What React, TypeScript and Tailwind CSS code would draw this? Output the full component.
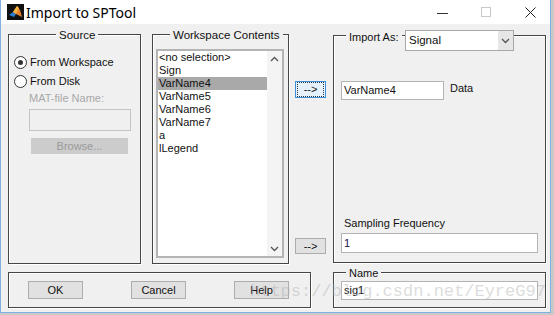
import React from "react";

const font = { fontFamily: '"Liberation Sans", Arial, sans-serif' };

function Chevron({ up = false }: { up?: boolean }) {
  return (
    <svg width="9" height="6" viewBox="0 0 9 6">
      <polyline
        points={up ? "1,5 4.5,1.5 8,5" : "1,1 4.5,4.5 8,1"}
        fill="none"
        stroke="#555"
        strokeWidth="1.3"
      />
    </svg>
  );
}

function Radio({ checked }: { checked?: boolean }) {
  return (
    <div className="w-[13px] h-[13px] rounded-full border border-[#333] bg-white flex items-center justify-center">
      {checked && <div className="w-[5px] h-[5px] rounded-full bg-[#333]" />}
    </div>
  );
}

function Panel({
  className = "",
  children,
}: {
  className?: string;
  children?: React.ReactNode;
}) {
  return (
    <div
      className={
        "relative border border-[#454545] shadow-[1px_1px_0_#ffffff,inset_1px_1px_0_#ffffff] " +
        className
      }
    >
      {children}
    </div>
  );
}

function Btn({
  label,
  className = "",
  focused = false,
}: {
  label: string;
  className?: string;
  focused?: boolean;
}) {
  return (
    <div
      className={
        "flex items-center justify-center text-[11px] text-[#111] " +
        (focused
          ? "bg-[#e5f1fb] border border-[#3c8fdc] "
          : "bg-[#e1e1e1] border border-[#adadad] ") +
        className
      }
    >
      {focused ? (
        <div className="w-full h-full border border-dotted border-[#333] flex items-center justify-center m-[1px]">
          {label}
        </div>
      ) : (
        label
      )}
    </div>
  );
}

export default function App() {
  const items = [
    "<no selection>",
    "Sign",
    "VarName4",
    "VarName5",
    "VarName6",
    "VarName7",
    "a",
    "lLegend",
  ];
  return (
    <div
      className="w-[554px] h-[315px] bg-[#c9c9c9] overflow-hidden relative"
      style={font}
    >
      <div className="w-[551px] h-[313px] flex flex-col bg-[#f0f0f0] border-l border-r border-b border-[#7fb0e0]">
        {/* Title bar */}
        <div className="h-[24px] bg-white flex items-center shrink-0 relative">
          <svg width="17" height="16" viewBox="0 0 17 16" className="ml-[6px]">
            <rect x="0" y="0" width="17" height="16" fill="#111" />
            <polygon points="2,11 6,8 9,10 7,13" fill="#2a7fd4" />
            <polygon points="6,8 10,2 13,6 15,13 9,10" fill="#e8802a" />
            <polygon points="10,2 12,4 9,10 6,8" fill="#f4b440" />
          </svg>
          <span
            className="ml-[2px] text-[14px] text-black whitespace-nowrap"
            style={{ fontFamily: '"Noto Sans", "Open Sans", sans-serif' }}
          >
            Import to SPTool
          </span>
          <div className="flex-1" />
          <div className="w-[11px] h-px bg-[#333] mr-[33px] mt-[2px]" />
          <div className="w-[10px] h-[10px] border border-[#c8c8c8] mr-[34px]" />
          <svg width="11" height="11" viewBox="0 0 11 11" className="mr-[14px]">
            <path d="M0.5 0.5 L10.5 10.5 M10.5 0.5 L0.5 10.5" stroke="#222" strokeWidth="1" />
          </svg>
        </div>

        {/* Content */}
        <div className="flex-1 flex flex-col pt-[10px] pl-[7px]">
          {/* Top row */}
          <div className="flex h-[230px]">
            {/* Source */}
            <Panel className="w-[133px] h-full">
              <span className="absolute top-[-7px] left-[47px] px-[3px] bg-[#f0f0f0] text-[11.5px] leading-[14px] text-[#111] whitespace-nowrap">
                Source
              </span>
              <div className="flex flex-col pt-[21px] pl-[5px] text-[11px] text-[#111]">
                <div className="flex items-center h-[13px]">
                  <Radio checked />
                  <span className="ml-[3px] whitespace-nowrap">From Workspace</span>
                </div>
                <div className="flex items-center h-[13px] mt-[6px]">
                  <Radio />
                  <span className="ml-[3px] whitespace-nowrap">From Disk</span>
                </div>
                <div className="ml-[15px] mt-[3px] text-[#a8a8a8] leading-[14px] whitespace-nowrap">
                  MAT-file Name:
                </div>
                <div className="ml-[15px] mt-[4px] w-[102px] h-[22px] border border-[#c4c4c4] bg-[#f0f0f0]" />
                <div className="ml-[17px] mt-[7px] w-[97px] h-[16px] bg-[#cccccc] text-[#9a9a9a] flex items-center justify-center">
                  Browse...
                </div>
              </div>
            </Panel>

            {/* Workspace Contents */}
            <Panel className="w-[137px] h-full ml-[11px]">
              <span className="absolute top-[-7px] left-[17px] px-[3px] bg-[#f0f0f0] text-[11.5px] leading-[14px] text-[#111] whitespace-nowrap">
                Workspace Contents
              </span>
              <div className="mt-[14px] ml-[3px] w-[128px] h-[209px] border-2 border-[#b4b4b4] bg-white flex">
                <div className="flex-1 flex flex-col text-[11px] text-[#111]">
                  {items.map((it) => (
                    <div
                      key={it}
                      className={
                        "h-[13px] leading-[13px] pl-[1px] whitespace-nowrap " +
                        (it === "VarName4" ? "bg-[#a9a9a9]" : "")
                      }
                    >
                      {it}
                    </div>
                  ))}
                </div>
                <div className="w-[15px] bg-[#f4f4f4] flex flex-col items-center justify-between pt-[5px] pb-[4px]">
                  <Chevron up />
                  <Chevron />
                </div>
              </div>
            </Panel>

            {/* Arrow column */}
            <div className="w-[44px] h-full flex flex-col pl-[6px]">
              <Btn label="-->" focused className="w-[31px] h-[17px] mt-[47px]" />
              <div className="flex-1" />
              <Btn label="-->" className="w-[31px] h-[16px] mb-[10px]" />
            </div>

            {/* Right panel */}
            <Panel className="w-[213px] h-[228px] mt-[1px]">
              <span className="absolute top-[-6px] left-[12px] px-[3px] bg-[#f0f0f0] text-[11px] leading-[14px] text-[#111] whitespace-nowrap">
                Import As:
              </span>
              <div className="absolute top-[-6px] left-[71px] w-[109px] h-[21px] bg-white border border-[#a8a8a8] flex items-center text-[11.5px] text-[#111]">
                <span className="ml-[3px] flex-1">Signal</span>
                <div className="w-[15px] h-full bg-[#e6e6e6] flex items-center justify-center">
                  <Chevron />
                </div>
              </div>
              <div className="flex items-center mt-[45px] ml-[7px]">
                <div className="w-[103px] h-[19px] bg-white border border-[#b4b4b4] text-[11px] leading-[17px] pl-[2px] text-[#111]">
                  VarName4
                </div>
                <span className="ml-[6px] text-[11px] text-[#111] -mt-[4px]">Data</span>
              </div>
              <div className="ml-[10px] mt-[116px] text-[11px] leading-[14px] text-[#111] whitespace-nowrap">
                Sampling Frequency
              </div>
              <div className="ml-[7px] mt-[3px] w-[197px] h-[20px] bg-white border border-[#b4b4b4] text-[11px] leading-[18px] pl-[2px] text-[#1a1050]">
                1
              </div>
            </Panel>
          </div>

          {/* Bottom row */}
          <div className="flex h-[36px] mt-[8px]">
            <Panel className="w-[303px] h-full flex items-center">
              <Btn label="OK" className="w-[55px] h-[18px] ml-[19px]" />
              <Btn label="Cancel" className="w-[55px] h-[18px] ml-[48px]" />
              <Btn label="Help" className="w-[55px] h-[18px] ml-[48px]" />
            </Panel>
            <Panel className="w-[213px] h-full ml-[22px]">
              <span className="absolute top-[-7px] left-[12px] px-[3px] bg-[#f0f0f0] text-[11px] leading-[14px] text-[#111]">
                Name
              </span>
              <div className="ml-[7px] mt-[8px] w-[197px] h-[19px] bg-white border border-[#b4b4b4] text-[11px] leading-[17px] pl-[2px] text-[#111]">
                sig1
              </div>
            </Panel>
          </div>
        </div>
      </div>

      {/* Watermark */}
      <span
        className="absolute left-[250px] top-[281px] text-[17px] leading-[22px] text-[#aaaaaa] opacity-40 pointer-events-none whitespace-nowrap"
        style={{ fontFamily: '"Liberation Mono", "Courier New", monospace' }}
      >
        https://blog.csdn.net/EyreG97
      </span>
    </div>
  );
}
